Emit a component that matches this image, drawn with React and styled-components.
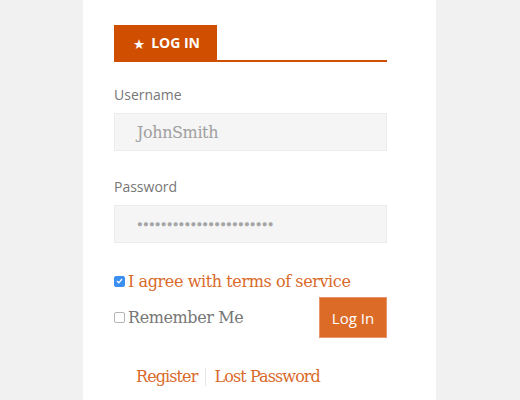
import React from 'react';
import styled, { createGlobalStyle } from 'styled-components';

const Global = createGlobalStyle`
  html, body { margin: 0; padding: 0; background: #f1f1f1; }
  body { font-family: "Open Sans", "Liberation Sans", sans-serif; }
`;

const Page = styled.div`
  width: 520px;
  height: 400px;
  overflow: hidden;
`;

const Panel = styled.div`
  width: 353px;
  height: 400px;
  margin-left: 83px;
  background: #fff;
  box-sizing: border-box;
  padding: 25px 49px 0 31px;
`;

const Tabs = styled.div`
  display: flex;
  border-bottom: 2px solid #d04e00;
`;

const Tab = styled.div`
  width: 101px;
  height: 35px;
  background: #d04e00;
  color: #fff;
  display: flex;
  align-items: center;
  justify-content: center;
  gap: 6px;
  font-size: 14px;
  font-weight: 700;
  padding-left: 2px;
`;

const Star = styled.span`
  font-family: "DejaVu Sans", sans-serif;
  font-size: 13.5px;
  position: relative;
  top: 1px;
`;

const Field = styled.div`
  margin-top: ${p => p.$top}px;
`;

const Label = styled.div`
  font-size: 14px;
  color: #777;
  line-height: 20px;
  margin-bottom: 8px;
`;

const Input = styled.div`
  height: 38px;
  box-sizing: border-box;
  background: #f5f5f5;
  border: 1px solid #ececec;
  display: flex;
  align-items: center;
  padding-left: 22px;
  font-family: "DejaVu Serif", "Liberation Serif", serif;
  font-size: 16px;
  letter-spacing: -0.4px;
  color: #a0a0a0;
`;

const Dots = styled.span`
  font-family: "Liberation Sans", sans-serif;
  font-size: 9.5px;
  letter-spacing: 0.2px;
  color: #a5a5a5;
  padding-bottom: 2px;
`;

const Check = styled.label`
  display: flex;
  align-items: center;
  gap: 3px;
  font-family: "DejaVu Serif", "Liberation Serif", serif;
  font-size: 16px;
  letter-spacing: -0.4px;
  color: ${p => (p.$accent ? '#d96a2a' : '#777')};
`;

const Box = styled.span`
  width: 11px;
  height: 11px;
  box-sizing: border-box;
  border-radius: 2px;
  border: 1px solid ${p => (p.$on ? '#3b8ff0' : '#b5b5b5')};
  background: ${p => (p.$on ? '#3b8ff0' : '#fff')};
  display: inline-flex;
  align-items: center;
  justify-content: center;
  flex: none;
`;

const AgreeRow = styled.div`
  margin-top: 26px;
  height: 24px;
  display: flex;
  align-items: center;
`;

const ActionRow = styled.div`
  margin-top: 4px;
  display: flex;
  align-items: center;
  justify-content: space-between;
`;

const Button = styled.button`
  width: 68px;
  height: 41px;
  background: #dc6b28;
  border: 1px solid #e8956a;
  color: #fff;
  font-family: "Open Sans", sans-serif;
  font-size: 15px;
  padding: 0;
  cursor: pointer;
`;

const Links = styled.div`
  margin-top: 29px;
  padding-left: 22px;
  display: flex;
  align-items: center;
  font-family: "DejaVu Serif", "Liberation Serif", serif;
  font-size: 16px;
  letter-spacing: -0.9px;
  color: #d96a2a;
`;

const Sep = styled.span`
  width: 1px;
  height: 18px;
  background: #e6e6e6;
  margin: 0 8px;
`;

export default function App() {
  return (
    <Page>
      <Global />
      <Panel>
        <Tabs>
          <Tab><Star>★</Star>LOG IN</Tab>
        </Tabs>
        <Field $top={23}>
          <Label>Username</Label>
          <Input>JohnSmith</Input>
        </Field>
        <Field $top={26}>
          <Label>Password</Label>
          <Input><Dots>●●●●●●●●●●●●●●●●●●●●●●●</Dots></Input>
        </Field>
        <AgreeRow>
          <Check $accent>
            <Box $on>
              <svg width="7" height="6" viewBox="0 0 7 6"><path d="M1 3l1.8 1.8L6 1" fill="none" stroke="#fff" strokeWidth="1.3" /></svg>
            </Box>
            I agree with terms of service
          </Check>
        </AgreeRow>
        <ActionRow>
          <Check><Box />Remember Me</Check>
          <Button>Log In</Button>
        </ActionRow>
        <Links>
          <span>Register</span>
          <Sep />
          <span>Lost Password</span>
        </Links>
      </Panel>
    </Page>
  );
}
